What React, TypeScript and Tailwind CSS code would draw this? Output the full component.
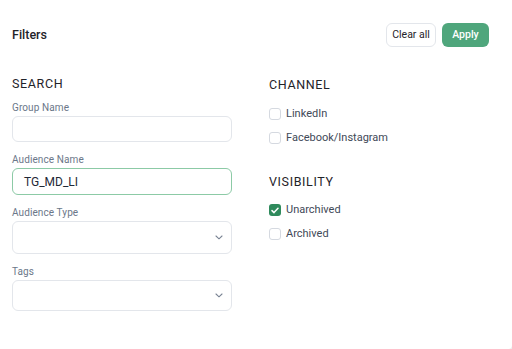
import { useState } from "react";

function Field({ label, value, select, height, focused }: { label: string; value?: string; select?: boolean; height: string; focused?: boolean }) {
  return (
    <div className="flex flex-col">
      <label className="text-[10px] leading-[13px] tracking-[0.01em] text-[#6b7789]">{label}</label>
      <div
        className={`mt-[2px] flex ${height} items-center justify-between rounded-[6px] border bg-white pr-[8px] pl-[11px] ${
          focused ? "border-[#8ccaa6]" : "border-[#e3e6eb]"
        }`}
      >
        <span className="text-[12px] text-[#1f2937]">{value}</span>
        {select && (
          <svg width="8" height="5" viewBox="0 0 8 5">
            <path d="M1 1l3 2.8L7 1" fill="none" stroke="#7a8494" strokeWidth="1.1" strokeLinecap="round" />
          </svg>
        )}
      </div>
    </div>
  );
}

function Check({ label, checked }: { label: string; checked?: boolean }) {
  return (
    <div className="flex h-4 items-center gap-[5px]">
      {checked ? (
        <span className="flex h-3 w-3 items-center justify-center rounded-[3px] bg-[#2f8a5c]">
          <svg width="8" height="7" viewBox="0 0 8 7">
            <path d="M1 3.6l2 2L7 1.3" fill="none" stroke="white" strokeWidth="1.5" strokeLinecap="round" strokeLinejoin="round" />
          </svg>
        </span>
      ) : (
        <span className="h-3 w-3 rounded-[3px] border border-[#d5d9e0] bg-white" />
      )}
      <span className="text-[11px] text-[#414957]">{label}</span>
    </div>
  );
}

export default function App() {
  const [name] = useState("TG_MD_LI");
  return (
    <div className="flex h-[349px] w-[512px] flex-col bg-[#ececec] font-['Roboto',sans-serif]">
      <div className="flex flex-1 flex-col rounded-br-[4px] bg-white px-3 pb-[3px]">
        <header className="flex items-center justify-between pt-[23px] pr-[11px]">
          <h1 className="pt-px text-[12.5px] font-medium text-[#1f2329]">Filters</h1>
          <div className="flex gap-[6px]">
            <button className="h-6 w-[50px] rounded-[6px] border border-[#e3e6eb] bg-white text-[10.5px] text-[#1f2329]">
              Clear all
            </button>
            <button className="h-6 w-[47px] rounded-[6px] bg-[#4fa67c] text-[10.5px] font-medium text-white">Apply</button>
          </div>
        </header>

        <div className="mt-[29px] flex">
          <section className="flex w-[220px] flex-col">
            <h2 className="text-[12.5px] leading-4 tracking-[0.05em] text-[#1f2329]">SEARCH</h2>
            <div className="mt-[9px] flex flex-col gap-[11px]">
              <Field label="Group Name" height="h-[26px]" />
              <Field label="Audience Name" value={name} height="h-[27px]" focused />
              <Field label="Audience Type" select height="h-[33px]" />
              <Field label="Tags" select height="h-[31px]" />
            </div>
          </section>

          <section className="ml-[37px] flex flex-col pt-px">
            <h2 className="text-[12.5px] leading-4 tracking-[0.05em] text-[#1f2329]">CHANNEL</h2>
            <div className="mt-[13px] flex flex-col gap-2">
              <Check label="LinkedIn" />
              <Check label="Facebook/Instagram" />
            </div>
            <h2 className="mt-[28px] text-[12.5px] leading-4 tracking-[0.05em] text-[#1f2329]">VISIBILITY</h2>
            <div className="mt-3 flex flex-col gap-2">
              <Check label="Unarchived" checked />
              <Check label="Archived" />
            </div>
          </section>
        </div>
      </div>
    </div>
  );
}
